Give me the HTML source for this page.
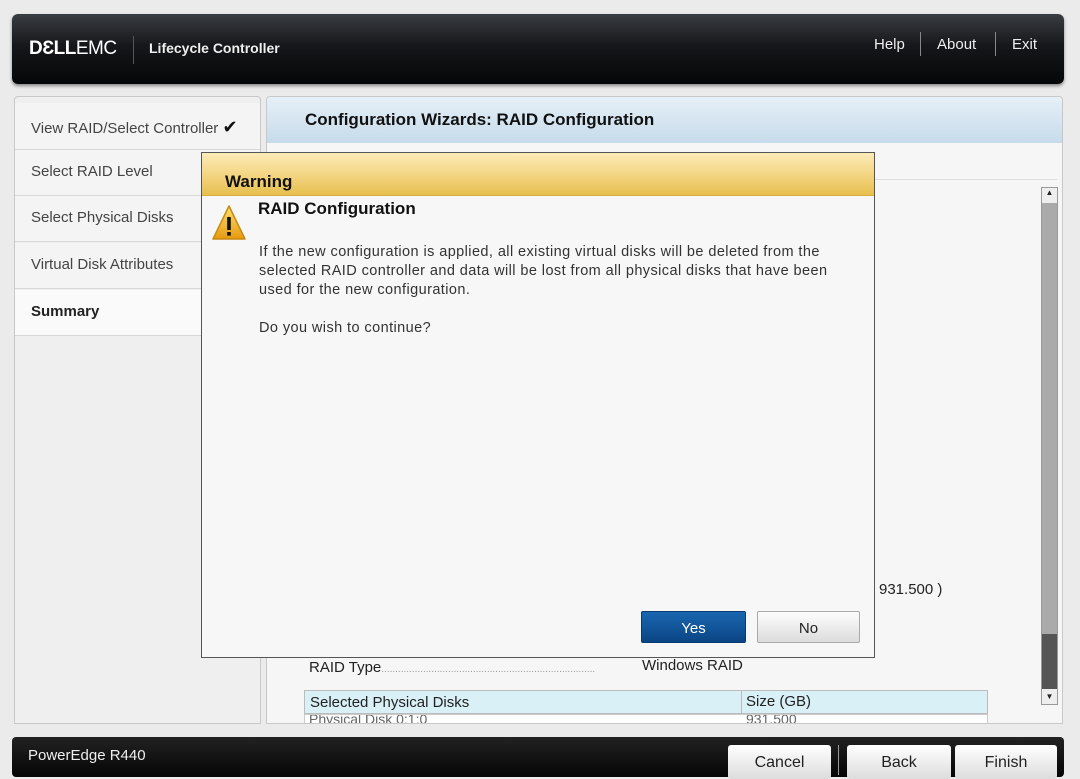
<!DOCTYPE html>
<html><head><style>
*{margin:0;padding:0;box-sizing:border-box}
body{width:1080px;height:774px;background:#ebebeb;font-family:"Liberation Sans",sans-serif;position:relative;overflow:hidden;color:#222}
.abs{position:absolute}
#hdr{left:12px;top:14px;width:1052px;height:70px;border-radius:6px;background:linear-gradient(#3a3d42,#15171a 45%,#050607);box-shadow:0 2px 3px #888}
#left{left:14px;top:96px;width:247px;height:628px;background:#efefef;border:1px solid #c8c8c8;border-radius:4px 4px 0 0;overflow:hidden}
.item{position:absolute;left:0;width:247px;height:46px;border-bottom:1px solid #d8d8d8;font-size:15px;color:#444;padding:13px 0 0 16px;background:#f4f4f4}
#right{left:266px;top:96px;width:797px;height:628px;background:#f6f6f6;border:1px solid #c8c8c8;border-radius:4px 4px 0 0;overflow:hidden}
#title{left:0;top:0;width:797px;height:46px;background:linear-gradient(#e6f0f8,#c6dbea);font-size:17px;font-weight:bold;padding:13px 0 0 38px;color:#111}
#dlg{left:201px;top:152px;width:674px;height:506px;background:#f7f7f7;border:1px solid #555}
#dh{left:0;top:0;width:672px;height:43px;background:linear-gradient(#fcebb8,#f2d27a 60%,#e6bf4e);font-weight:bold;font-size:17px;padding:19px 0 0 23px;color:#111;border-bottom:1px solid #d8b040}
.btn{position:absolute;height:32px;border-radius:2px;font-size:15px;text-align:center;padding-top:8px}
#ftr{left:12px;top:737px;width:1052px;height:40px;background:linear-gradient(#222,#050505);border-radius:4px}
.fb{position:absolute;top:745px;height:34px;background:linear-gradient(#fff,#ddd);border-radius:3px;font-size:16px;text-align:center;padding-top:9px;color:#222}
</style></head><body>
<div id="hdr" class="abs">
 <div class="abs" style="left:17px;top:24px;color:#fff;font-size:19px;letter-spacing:-0.5px"><b>D&#x190;LL</b>EMC</div>
 <div class="abs" style="left:121px;top:22px;width:1px;height:28px;background:#555"></div>
 <div class="abs" style="left:137px;top:26px;color:#eee;font-size:14px;font-weight:bold">Lifecycle Controller</div>
 <div class="abs" style="left:862px;top:22px;color:#eee;font-size:15px">Help</div>
 <div class="abs" style="left:908px;top:18px;width:1px;height:24px;background:#888"></div>
 <div class="abs" style="left:925px;top:22px;color:#eee;font-size:15px">About</div>
 <div class="abs" style="left:983px;top:18px;width:1px;height:24px;background:#888"></div>
 <div class="abs" style="left:1000px;top:22px;color:#eee;font-size:15px">Exit</div>
</div>
<div id="left" class="abs">
 <div class="item" style="top:6px;height:47px;padding-top:14px">View RAID/Select Controller <span style="font-size:18px;color:#111">&#x2714;</span></div>
 <div class="item" style="top:53px">Select RAID Level</div>
 <div class="item" style="top:99px">Select Physical Disks</div>
 <div class="item" style="top:146px">Virtual Disk Attributes</div>
 <div class="item" style="top:193px;background:#fafafa;font-weight:bold;color:#222">Summary</div>
</div>
<div id="right" class="abs">
 <div id="title" class="abs">Configuration Wizards: RAID Configuration</div>
 <div class="abs" style="left:10px;top:82px;width:780px;height:1px;background:#ddd"></div>
 <div class="abs" style="left:774px;top:90px;width:17px;height:518px;background:#aaa;border:1px solid #999"></div>
 <div class="abs" style="left:775px;top:91px;width:15px;height:15px;background:#eee;font-size:8px;text-align:center">&#x25B2;</div>
 <div class="abs" style="left:775px;top:537px;width:15px;height:55px;background:#555"></div>
 <div class="abs" style="left:775px;top:592px;width:15px;height:15px;background:#eee;font-size:8px;text-align:center;padding-top:3px">&#x25BC;</div>
 <div class="abs" style="left:612px;top:484px;font-size:15px">931.500 )</div>
 <div class="abs" style="left:42px;top:562px;font-size:15px">RAID Type<span style="color:#999;font-size:10px">.............................................................................</span></div>
 <div class="abs" style="left:375px;top:560px;font-size:15px">Windows RAID</div>
 <div class="abs" style="left:37px;top:593px;width:684px;height:24px;background:#d9f0f7;border:1px solid #bbb;font-size:15px;padding:3px 0 0 5px">Selected Physical Disks</div>
 <div class="abs" style="left:474px;top:593px;width:1px;height:35px;background:#bbb"></div>
 <div class="abs" style="left:479px;top:596px;font-size:15px">Size (GB)</div>
 <div class="abs" style="left:37px;top:617px;width:684px;height:11px;background:#fff;border:1px solid #ccc;overflow:hidden"><span style="position:absolute;left:4px;top:-4px;font-size:14px;color:#666">Physical Disk 0:1:0</span><span style="position:absolute;left:441px;top:-4px;font-size:14px;color:#666">931.500</span></div>
</div>
<div id="dlg" class="abs">
 <div id="dh" class="abs">Warning</div>
 <svg class="abs" style="left:9px;top:50px" width="36" height="40" viewBox="0 0 36 40"><defs><linearGradient id="g" x1="0" y1="0" x2="0" y2="1"><stop offset="0" stop-color="#fde070"/><stop offset="1" stop-color="#e69a10"/></linearGradient></defs><path d="M18 3 L34 36 L2 36 Z" fill="url(#g)" stroke="#c88a10" stroke-width="1.5" stroke-linejoin="round"/><rect x="16.2" y="14" width="3.6" height="13" fill="#111"/><rect x="16.2" y="29" width="3.6" height="3.6" fill="#111"/></svg>
 <div class="abs" style="left:56px;top:46px;font-size:17px;font-weight:bold;color:#111">RAID Configuration</div>
 <div class="abs" style="left:57px;top:90px;font-size:14.5px;line-height:19px;color:#333;white-space:nowrap;letter-spacing:0.42px">If the new configuration is applied, all existing virtual disks will be deleted from the<br>selected RAID controller and data will be lost from all physical disks that have been<br>used for the new configuration.</div>
 <div class="abs" style="left:57px;top:167px;font-size:14.5px;color:#333;letter-spacing:0.42px">Do you wish to continue?</div>
 <div class="btn" style="left:439px;top:458px;width:105px;background:linear-gradient(#1a66b0,#0b4585);color:#fff;border:1px solid #0a3a70">Yes</div>
 <div class="btn" style="left:555px;top:458px;width:103px;background:linear-gradient(#fdfdfd,#dcdcdc);border:1px solid #aaa;color:#222">No</div>
</div>
<div id="ftr" class="abs">
 <div class="abs" style="left:16px;top:10px;color:#eee;font-size:15px">PowerEdge R440</div>
</div>
<div class="fb" style="left:728px;width:103px">Cancel</div>
<div class="abs" style="left:838px;top:745px;width:1px;height:30px;background:#999"></div>
<div class="fb" style="left:847px;width:104px">Back</div>
<div class="fb" style="left:955px;width:102px">Finish</div>
</body></html>
